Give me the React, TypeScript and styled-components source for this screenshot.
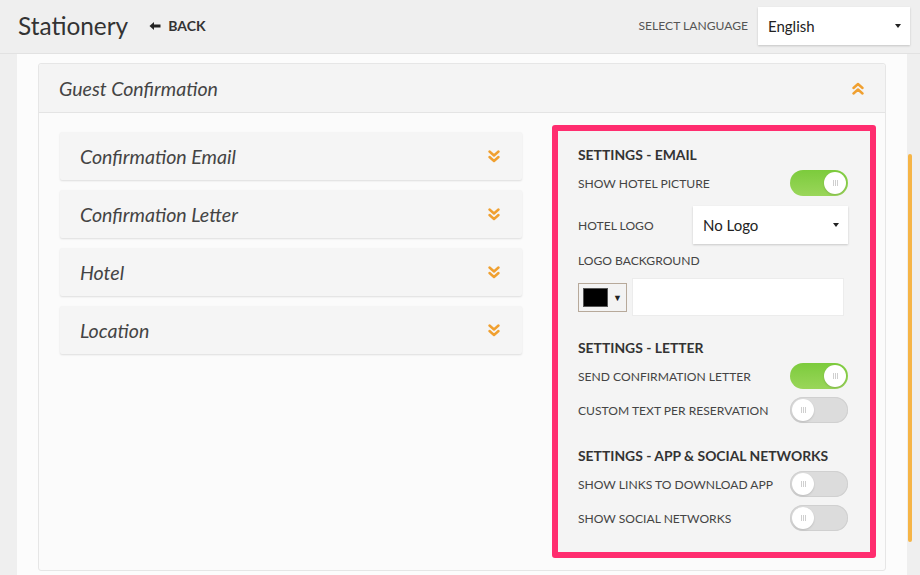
import React from 'react'
import styled, { createGlobalStyle } from 'styled-components'

const GlobalStyle = createGlobalStyle`
  html, body {
    margin: 0;
    padding: 0;
    background: #efefef;
    font-family: Lato, "Open Sans", "Liberation Sans", sans-serif;
    color: #444;
  }
  * { box-sizing: border-box; }
`

const Page = styled.div`
  width: 920px;
  height: 575px;
  overflow: hidden;
  display: flex;
  flex-direction: column;
`

const TopBar = styled.header`
  height: 54px;
  flex-shrink: 0;
  display: flex;
  align-items: center;
  padding: 0 10px 2px 18px;
  border-bottom: 1px solid #e2e2e2;
`

const Title = styled.h1`
  margin: 0;
  font-size: 24.4px;
  font-weight: 400;
  color: #333;
`

const Back = styled.a`
  margin-left: 21px;
  display: flex;
  align-items: center;
  gap: 7px;
  font-size: 14px;
  font-weight: 700;
  color: #333;
  cursor: pointer;
`

const Spacer = styled.div`
  flex: 1;
`

const LangLabel = styled.span`
  font-size: 12.1px;
  color: #555;
  margin-right: 10px;
`

const Dropdown = styled.div<{ $w: number; $size: number }>`
  width: ${(p) => p.$w}px;
  height: 38px;
  background: #fff;
  box-shadow: 0 1px 2px rgba(0, 0, 0, 0.18);
  display: flex;
  align-items: center;
  justify-content: space-between;
  padding: 0 9px 0 10px;
  font-size: ${(p) => p.$size}px;
  color: #222;
`

const Caret = styled.span`
  width: 0;
  height: 0;
  border-left: 3px solid transparent;
  border-right: 3px solid transparent;
  border-top: 4px solid #222;
`

const Body = styled.div`
  flex: 1;
  display: flex;
`

const Main = styled.main`
  margin-left: 17px;
  width: 890px;
  background: #fcfcfc;
  padding: 9px 21px 0;
`

const ScrollTrack = styled.div`
  flex: 1;
  padding: 100px 0 0 1px;
`

const ScrollThumb = styled.div`
  width: 4px;
  height: 388px;
  border-radius: 2px;
  background: #f6b547;
`

const Card = styled.section`
  border: 1px solid #e6e6e6;
  border-radius: 3px;
  height: 508px;
  background: #fbfbfb;
`

const CardHeader = styled.div`
  height: 49px;
  display: flex;
  align-items: center;
  justify-content: space-between;
  padding: 0 21px 0 20px;
  background: #f4f4f4;
  border-bottom: 1px solid #e4e4e4;
  border-radius: 3px 3px 0 0;
`

const ItalicTitle = styled.span`
  font-size: 19.6px;
  font-style: italic;
  color: #444;
`

const CardBody = styled.div`
  display: flex;
  gap: 30px;
  padding: 12px 9px 0 21px;
`

const List = styled.div`
  width: 462px;
  padding-top: 7px;
  display: flex;
  flex-direction: column;
  gap: 10px;
`

const Item = styled.div`
  height: 48px;
  background: #f5f5f5;
  border-radius: 2px;
  box-shadow: 0 1px 2px rgba(0, 0, 0, 0.12);
  display: flex;
  align-items: center;
  justify-content: space-between;
  padding: 0 22px 0 20px;
`

const Highlight = styled.div`
  width: 324px;
  height: 433px;
  border: 6px solid #ff2d6f;
  border-radius: 3px;
  background: #f4f4f4;
  padding: 14px 22px 0 20px;
  display: flex;
  flex-direction: column;
`

const Heading = styled.h3<{ $top?: number }>`
  margin: ${(p) => p.$top ?? 0}px 0 0;
  font-size: 13.9px;
  line-height: 20px;
  font-weight: 700;
  color: #333;
`

const Row = styled.div<{ $top: number; $h?: number }>`
  margin-top: ${(p) => p.$top}px;
  height: ${(p) => p.$h ?? 26}px;
  display: flex;
  align-items: center;
  justify-content: space-between;
`

const Label = styled.span`
  font-size: 12.1px;
  color: #444;
`

const Track = styled.div<{ $on: boolean }>`
  width: 58px;
  height: 26px;
  border-radius: 13px;
  padding: 2px;
  display: flex;
  justify-content: ${(p) => (p.$on ? 'flex-end' : 'flex-start')};
  background: ${(p) => (p.$on ? 'linear-gradient(180deg, #7ccb3c, #9ad65a)' : '#dcdcdc')};
  box-shadow: ${(p) => (p.$on ? 'none' : 'inset 0 0 0 1px #d0d0d0')};
`

const Knob = styled.div`
  width: 22px;
  height: 22px;
  border-radius: 50%;
  background: #fff;
  box-shadow: 0 1px 2px rgba(0, 0, 0, 0.15);
  display: flex;
  align-items: center;
  justify-content: center;
  gap: 1px;
  & > i {
    width: 1px;
    height: 6px;
    background: #cfcfcf;
  }
`

const ColorRow = styled.div`
  margin-top: 8px;
  display: flex;
  align-items: center;
  gap: 5px;
`

const Swatch = styled.div`
  width: 49px;
  height: 29px;
  border: 1px solid #b7a99a;
  background: #f3f3f3;
  display: flex;
  align-items: center;
  gap: 5px;
  padding-left: 4px;
  font-size: 9px;
  color: #222;
  & > b {
    width: 25px;
    height: 19px;
    background: #000;
    border: 1px solid #555;
  }
`

const TextInput = styled.div`
  width: 212px;
  height: 38px;
  background: #fff;
  border: 1px solid #ececec;
`

const Chevrons = ({ up }: { up?: boolean }) => (
  <svg width="12" height="13" viewBox="0 0 12 13" style={{ transform: up ? 'rotate(180deg)' : undefined }}>
    <path d="M1.5 1.5 L6 5.5 L10.5 1.5 M1.5 7 L6 11 L10.5 7" fill="none" stroke="#f0a030" strokeWidth="2.4" strokeLinecap="round" strokeLinejoin="round" />
  </svg>
)

const Toggle = ({ on }: { on: boolean }) => (
  <Track $on={on}>
    <Knob>
      <i />
      <i />
      <i />
    </Knob>
  </Track>
)

const sections = ['Confirmation Email', 'Confirmation Letter', 'Hotel', 'Location']

export default function App() {
  return (
    <Page>
      <GlobalStyle />
      <TopBar>
        <Title>Stationery</Title>
        <Back>
          <svg width="12" height="10" viewBox="0 0 12 10">
            <path d="M0.5 5 L5 1 L5 3.6 L11.5 3.6 L11.5 6.4 L5 6.4 L5 9 Z" fill="#222" />
          </svg>
          BACK
        </Back>
        <Spacer />
        <LangLabel>SELECT LANGUAGE</LangLabel>
        <Dropdown $w={152} $size={15}>
          English
          <Caret />
        </Dropdown>
      </TopBar>
      <Body>
        <Main>
          <Card>
            <CardHeader>
              <ItalicTitle>Guest Confirmation</ItalicTitle>
              <Chevrons up />
            </CardHeader>
            <CardBody>
              <List>
                {sections.map((s) => (
                  <Item key={s}>
                    <ItalicTitle>{s}</ItalicTitle>
                    <Chevrons />
                  </Item>
                ))}
              </List>
              <Highlight>
                <Heading>SETTINGS - EMAIL</Heading>
                <Row $top={5}>
                  <Label>SHOW HOTEL PICTURE</Label>
                  <Toggle on />
                </Row>
                <Row $top={10} $h={38}>
                  <Label>HOTEL LOGO</Label>
                  <Dropdown $w={155} $size={15}>
                    No Logo
                    <Caret />
                  </Dropdown>
                </Row>
                <Row $top={6} $h={20}>
                  <Label>LOGO BACKGROUND</Label>
                </Row>
                <ColorRow>
                  <Swatch>
                    <b />▼
                  </Swatch>
                  <TextInput />
                </ColorRow>
                <Heading $top={22}>SETTINGS - LETTER</Heading>
                <Row $top={5}>
                  <Label>SEND CONFIRMATION LETTER</Label>
                  <Toggle on />
                </Row>
                <Row $top={8}>
                  <Label>CUSTOM TEXT PER RESERVATION</Label>
                  <Toggle on={false} />
                </Row>
                <Heading $top={23}>SETTINGS - APP &amp; SOCIAL NETWORKS</Heading>
                <Row $top={5}>
                  <Label>SHOW LINKS TO DOWNLOAD APP</Label>
                  <Toggle on={false} />
                </Row>
                <Row $top={8}>
                  <Label>SHOW SOCIAL NETWORKS</Label>
                  <Toggle on={false} />
                </Row>
              </Highlight>
            </CardBody>
          </Card>
        </Main>
        <ScrollTrack>
          <ScrollThumb />
        </ScrollTrack>
      </Body>
    </Page>
  )
}
